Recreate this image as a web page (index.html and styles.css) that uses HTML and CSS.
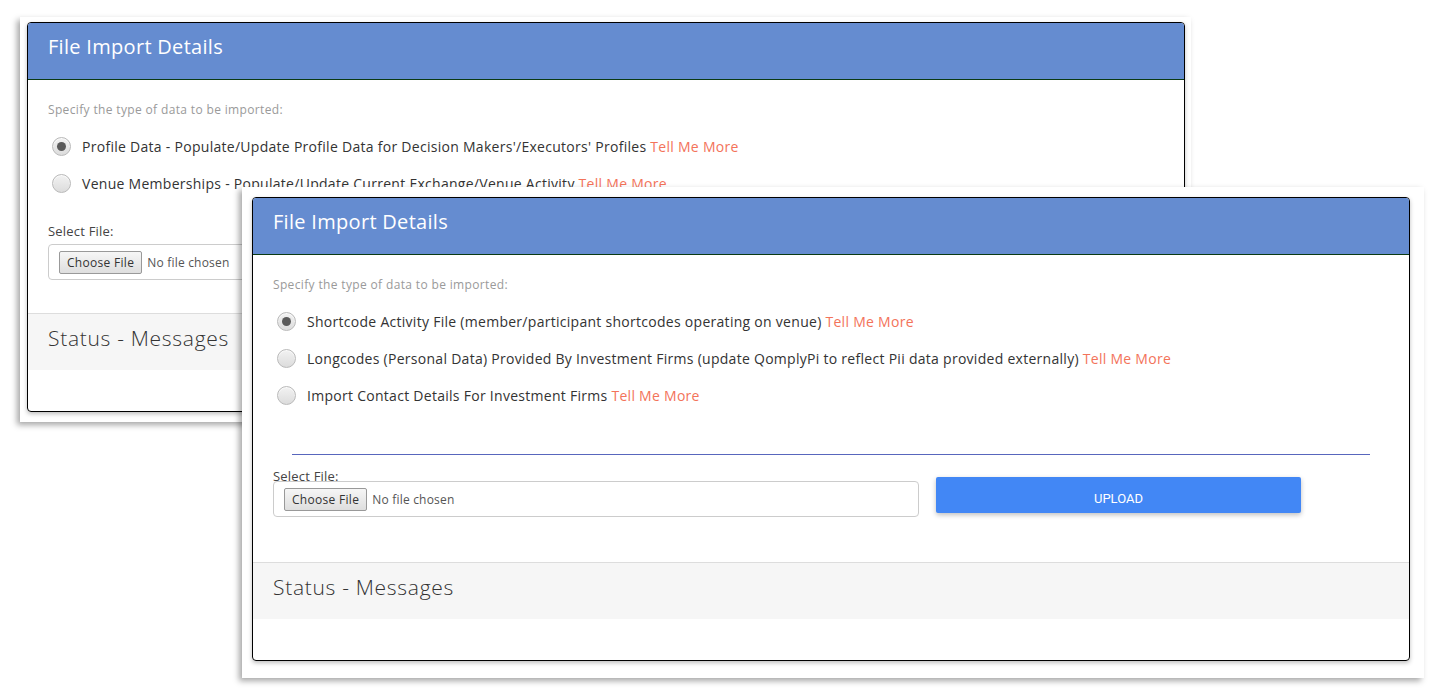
FILE: index.html
```html
<!DOCTYPE html>
<html lang="en">
<head>
    <meta charset="UTF-8">
    <meta name="viewport" content="width=device-width, initial-scale=1.0">
    <title>File Import Details</title>
    <link rel="stylesheet" href="styles.css">
</head>
<body>
    <div class="desk">

        <!-- back window: profile import -->
        <div class="window window-back">
            <div class="panel">
                <div class="panel-header">
                    <h2>File Import Details</h2>
                </div>
                <div class="panel-body">
                    <div class="hint">Specify the type of data to be imported:</div>
                    <div class="options">
                        <label class="option">
                            <input type="radio" name="type1" checked>
                            <span>Profile Data - Populate/Update Profile Data for Decision Makers'/Executors' Profiles <a href="#" class="more">Tell Me More</a></span>
                        </label>
                        <label class="option">
                            <input type="radio" name="type1">
                            <span>Venue Memberships - Populate/Update Current Exchange/Venue Activity <a href="#" class="more">Tell Me More</a></span>
                        </label>
                    </div>
                    <div class="file-row">
                        <div class="file-col">
                            <div class="file-label">Select File:</div>
                            <div class="file-box">
                                <span class="file-btn">Choose File</span>
                                <span class="file-name">No file chosen</span>
                            </div>
                        </div>
                        <button class="upload-button">UPLOAD</button>
                    </div>
                </div>
                <div class="status">
                    <h3>Status - Messages</h3>
                </div>
                <div class="panel-foot"></div>
            </div>
        </div>

        <!-- front window: shortcode import -->
        <div class="window window-front">
            <div class="panel">
                <div class="panel-header">
                    <h2>File Import Details</h2>
                </div>
                <div class="panel-body">
                    <div class="hint">Specify the type of data to be imported:</div>
                    <div class="options">
                        <label class="option">
                            <input type="radio" name="type2" checked>
                            <span>Shortcode Activity File (member/participant shortcodes operating on venue) <a href="#" class="more">Tell Me More</a></span>
                        </label>
                        <label class="option">
                            <input type="radio" name="type2">
                            <span>Longcodes (Personal Data) Provided By Investment Firms (update QomplyPi to reflect Pii data provided externally) <a href="#" class="more">Tell Me More</a></span>
                        </label>
                        <label class="option">
                            <input type="radio" name="type2">
                            <span>Import Contact Details For Investment Firms <a href="#" class="more">Tell Me More</a></span>
                        </label>
                    </div>
                    <div class="divider"></div>
                    <div class="file-row">
                        <div class="file-col">
                            <div class="file-label">Select File:</div>
                            <div class="file-box">
                                <span class="file-btn">Choose File</span>
                                <span class="file-name">No file chosen</span>
                            </div>
                        </div>
                        <button class="upload-button">UPLOAD</button>
                    </div>
                </div>
                <div class="status">
                    <h3>Status - Messages</h3>
                </div>
                <div class="panel-foot"></div>
            </div>
        </div>

    </div>
</body>
</html>
```

FILE: styles.css
```css
body {
    margin: 0;
    background-color: #fff;
    font-family: "Open Sans", Arial, sans-serif;
    color: #333;
}

.desk {
    position: relative;
    width: 1445px;
    height: 692px;
    overflow: hidden;
}

/* windows are screenshots placed on the canvas */
.window {
    position: absolute;
    background-color: #fff;
    box-shadow: -3px 3px 6px rgba(0, 0, 0, 0.35);
}

.window-back {
    left: 20px;
    top: 17px;
    width: 1158px;
    padding: 5px 6px 10px 7px;
}

.window-front {
    left: 242px;
    top: 187px;
    width: 1158px;
    padding: 10px 14px 17px 10px;
}

.panel {
    border: 1px solid #000;
    border-radius: 4px;
    overflow: hidden;
    box-shadow: 0 2px 4px rgba(0, 0, 0, 0.25);
}

.panel-header {
    background-color: #658cd0;
    border-bottom: 1px solid #0b3a12;
    padding: 12px 20px 20px;
}

.panel-header h2 {
    margin: 0;
    font-size: 20px;
    line-height: 24px;
    font-weight: 400;
    letter-spacing: 0.3px;
    color: #fff;
}

.panel-body {
    padding: 22px 20px 33px;
}

.window-front .panel-body {
    padding-bottom: 45px;
}

.hint {
    font-size: 12px;
    line-height: 16px;
    letter-spacing: 0.35px;
    color: #9a9a9a;
}

.options {
    margin-top: 10px;
}

.option {
    display: flex;
    align-items: center;
    height: 37px;
    padding-left: 4px;
    font-size: 14px;
    letter-spacing: 0.28px;
    color: #333;
    cursor: pointer;
}

.option input[type="radio"] {
    appearance: none;
    -webkit-appearance: none;
    width: 19px;
    height: 19px;
    margin: 0 11px 0 0;
    border: 1px solid #b9b9b9;
    border-radius: 50%;
    background: linear-gradient(#f2f2f2, #dcdcdc);
    box-shadow: inset 0 1px 1px rgba(255, 255, 255, 0.8);
    position: relative;
    flex-shrink: 0;
}

.option input[type="radio"]:checked::after {
    content: "";
    position: absolute;
    left: 4px;
    top: 4px;
    width: 9px;
    height: 9px;
    border-radius: 50%;
    background-color: #5a5a5a;
}

.more {
    color: #f3735a;
    text-decoration: none;
}

.divider {
    margin: 40px 19px 15px;
    border-top: 1px solid #5866bd;
}

.file-row {
    display: flex;
    align-items: flex-start;
}

.file-col {
    width: 646px;
}

.file-label {
    font-size: 13px;
    line-height: 12px;
    letter-spacing: 0.2px;
    color: #444;
}

.window-back .file-row {
    margin-top: 20px;
}

.window-back .file-label {
    line-height: 18px;
    margin-bottom: 4px;
}

.file-box {
    display: flex;
    align-items: center;
    height: 34px;
    padding: 0 10px;
    border: 1px solid #ccc;
    border-radius: 4px;
}

.window-front .file-box {
    margin-top: -1px;
}

.file-btn {
    display: inline-block;
    height: 21px;
    line-height: 21px;
    padding: 0 7px;
    border: 1px solid #999;
    border-radius: 2px;
    background: linear-gradient(#f6f6f6, #dedede);
    font-size: 12px;
    letter-spacing: 0.3px;
    color: #333;
}

.file-name {
    margin-left: 5px;
    font-size: 12px;
    letter-spacing: 0.2px;
    color: #555;
}

.upload-button {
    width: 365px;
    height: 36px;
    margin: 7px 0 0 17px;
    padding-top: 7px;
    border: none;
    border-radius: 2px;
    background-color: #4287f5;
    color: #fff;
    font-family: Roboto, Arial, sans-serif;
    font-size: 13px;
    box-shadow: 0 2px 5px rgba(0, 0, 0, 0.25);
    cursor: pointer;
}

.status {
    border-top: 1px solid #ddd;
    background-color: #f6f6f6;
    height: 57px;
    padding: 0 20px 8px;
    box-sizing: border-box;
    display: flex;
    align-items: center;
}

.status h3 {
    margin: 0;
    font-size: 21px;
    font-weight: 300;
    letter-spacing: 0.7px;
    color: #333;
}

.panel-foot {
    height: 41px;
}
```
